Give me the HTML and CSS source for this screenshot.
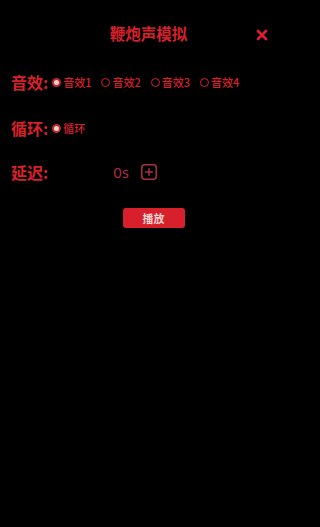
FILE: index.html
```html
<!DOCTYPE html>
<html lang="zh">
<head>
<meta charset="utf-8">
<link rel="stylesheet" href="styles.css">
</head>
<body>
<div class="page">
  <header class="header">
    <h1 class="title">鞭炮声模拟</h1>
    <span class="close" aria-label="close">
      <svg width="12" height="12" viewBox="0 0 12 12"><path d="M2 2 L10 10 M10 2 L2 10" stroke="#d8202c" stroke-width="2.8" stroke-linecap="round"/></svg>
    </span>
  </header>

  <div class="row row-sound">
    <span class="label">音效:</span>
    <div class="options">
      <label class="opt"><span class="radio checked"></span>音效1</label>
      <label class="opt"><span class="radio"></span>音效2</label>
      <label class="opt"><span class="radio"></span>音效3</label>
      <label class="opt"><span class="radio"></span>音效4</label>
    </div>
  </div>

  <div class="row row-loop">
    <span class="label">循环:</span>
    <div class="options">
      <label class="opt"><span class="radio checked"></span>循环</label>
    </div>
  </div>

  <div class="row row-delay">
    <span class="label">延迟:</span>
    <span class="delay-val">0s</span>
    <span class="plus">
      <svg width="16" height="16" viewBox="0 0 16 16"><rect x="0.75" y="0.75" width="14.5" height="14.5" rx="3" fill="none" stroke="#a8323e" stroke-width="1.5"/><path d="M8 4.2 V11.8 M4.2 8 H11.8" stroke="#a8323e" stroke-width="1.5"/></svg>
    </span>
  </div>

  <div class="actions">
    <button class="play">播放</button>
  </div>
</div>
</body>
</html>
```

FILE: styles.css
```css
html, body {
  margin: 0;
  padding: 0;
  background: #000;
  height: 100%;
}
body {
  font-family: "Noto Sans CJK SC", "Noto Sans", sans-serif;
  color: #d8202c;
}
.page {
  width: 297px;
  display: flex;
  flex-direction: column;
}
.header {
  position: relative;
  display: flex;
  justify-content: center;
  padding-top: 23px;
  height: 28px;
}
.title {
  margin: 0;
  font-size: 15.5px;
  line-height: 20px;
  font-weight: 700;
  color: #d8202c;
}
.close {
  position: absolute;
  right: 29px;
  top: 29px;
  width: 12px;
  height: 12px;
  display: flex;
}
.row {
  display: flex;
  align-items: center;
  padding-left: 11px;
  height: 24px;
}
.row-sound { margin-top: 19px; }
.row-loop { margin-top: 22px; }
.row-delay { margin-top: 20px; }
.label {
  font-size: 16px;
  font-weight: 700;
  line-height: 24px;
  color: #d8202c;
}
.options {
  display: flex;
  align-items: center;
  gap: 10px;
  margin-left: 4px;
}
.opt {
  display: flex;
  align-items: center;
  font-size: 11px;
  font-weight: 500;
  line-height: 14px;
  color: #d8202c;
  gap: 2px;
}
.radio {
  width: 7px;
  height: 7px;
  border: 1.3px solid #d8202c;
  border-radius: 50%;
  box-sizing: content-box;
}
.radio.checked {
  background: #f2d2c0;
  border: 2px solid #c02838;
  width: 5px;
  height: 5px;
}
.delay-val {
  margin-left: 65px;
  font-size: 15px;
  font-family: "Noto Sans", sans-serif;
  color: #a8323e;
  line-height: 24px;
}
.plus {
  margin-left: 12px;
  display: flex;
}
.actions {
  display: flex;
  justify-content: center;
  margin-top: 24px;
  padding-left: 10px;
}
.play {
  width: 62px;
  height: 20px;
  border: none;
  border-radius: 3px;
  background: #d8202c;
  color: #f6d4d0;
  font-family: "Noto Sans CJK SC", sans-serif;
  font-size: 11px;
  font-weight: 700;
  line-height: 20px;
  padding: 0;
}
```
